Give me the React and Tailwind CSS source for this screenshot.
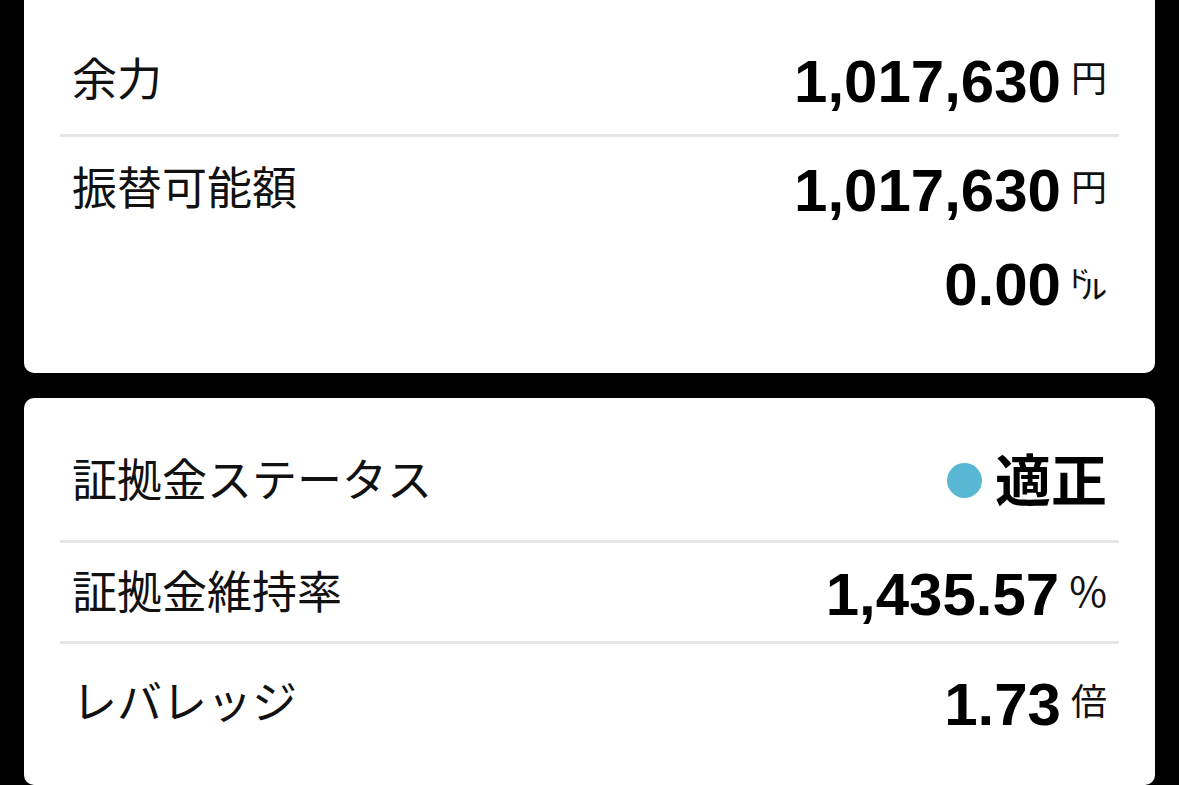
import React from 'react'

const jp = "font-['Noto_Sans_CJK_JP','Noto_Sans',sans-serif]"
const num = "font-['Liberation_Sans','Noto_Sans_CJK_JP',sans-serif] font-bold text-[60px] leading-[60px] text-black"

function Label({ children }) {
    return <span className={`${jp} mt-[2px] text-[45px] leading-[45px] text-[#111]`}>{children}</span>
}

function Amount({ value, unit, unitSize = 'text-[36px]' }) {
    return (
        <div className="flex h-[60px] items-center">
            <span className={num}>{value}</span>
            <span className={`${jp} ${unitSize} mb-[12px] ml-[10px] leading-none text-[#111]`}>{unit}</span>
        </div>
    )
}

// the little "ドル" mark: small ド up top, ル tucked in below
function Dollar() {
    return (
        <div className="flex h-[60px] items-center">
            <span className={num}>0.00</span>
            <span className={`${jp} mb-[4px] ml-[6px] flex h-[35px] text-[#111]`}>
                <span className="self-start text-[23px] font-medium leading-none tracking-[-9px]">ド</span>
                <span className="self-end text-[26px] font-medium leading-none">ル</span>
            </span>
        </div>
    )
}

function Divider() {
    return <div className="h-[3px] bg-[#e3e5e8]" />
}

export default function App() {
    return (
        <div className="min-h-screen bg-black px-6">
            <section className="rounded-b-[10px] bg-white px-9 pb-[58px]">
                <div className="flex items-start justify-between px-3 pb-[22px] pt-[52px]">
                    <Label>余力</Label>
                    <Amount value="1,017,630" unit="円" />
                </div>
                <Divider />
                <div className="flex items-start justify-between px-3 pt-[24px]">
                    <Label>振替可能額</Label>
                    <div className="flex flex-col items-end gap-[34px]">
                        <Amount value="1,017,630" unit="円" />
                        <Dollar />
                    </div>
                </div>
            </section>

            <section className="mt-[25px] rounded-[10px] bg-white px-9 pb-[50px]">
                <div className="flex h-[142px] items-start justify-between px-3 pb-[27px] pt-[52px]">
                    <div className="flex h-[60px] items-center">
                        <span className={`${jp} mb-[5px] text-[45px] leading-none text-[#111]`}>証拠金ステータス</span>
                    </div>
                    <div className="flex h-[60px] items-center">
                        <span className="h-[35px] w-[35px] rounded-full bg-[#58b8d3]" />
                        <span className={`${jp} mb-[6px] ml-[13px] text-[56px] font-bold leading-none text-black`}>適正</span>
                    </div>
                </div>
                <Divider />
                <div className="flex items-start justify-between px-3 pb-[16px] pt-[22px]">
                    <Label>証拠金維持率</Label>
                    <Amount value="1,435.57" unit="%" unitSize="text-[41px]" />
                </div>
                <Divider />
                <div className="flex items-start justify-between px-3 pt-[31px]">
                    <Label>レバレッジ</Label>
                    <Amount value="1.73" unit="倍" />
                </div>
            </section>
        </div>
    )
}
